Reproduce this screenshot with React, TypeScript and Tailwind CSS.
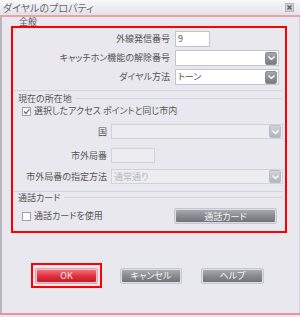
import React from "react";

function DropButton({ disabled = false }: { disabled?: boolean }) {
  return (
    <div
      className={
        "w-[12px] h-[13px] mr-[1px] rounded-[2px] border flex items-center justify-center " +
        (disabled
          ? "border-[#b8bcc6] bg-gradient-to-b from-[#d0d4dc] to-[#b0b5c0]"
          : "border-[#8a8d92] bg-gradient-to-b from-[#a4a7ac] to-[#777a7f]")
      }
    >
      <svg width="7" height="4" viewBox="0 0 7 4">
        <path d="M0.5 0.5 L3.5 3.5 L6.5 0.5" fill="none" stroke="#ffffff" strokeWidth="1.3" />
      </svg>
    </div>
  );
}

function Select({
  width,
  value,
  disabled = false,
}: {
  width: string;
  value?: string;
  disabled?: boolean;
}) {
  return (
    <div
      className={
        width +
        " h-full flex items-center border " +
        (disabled ? "bg-[#ececf1] border-[#d2d2da]" : "bg-white border-[#c4c4cc]")
      }
    >
      <span className={"flex-1 pl-[2px] " + (disabled ? "text-[#b8b8c0]" : "text-[#555]")}>
        {value}
      </span>
      <DropButton disabled={disabled} />
    </div>
  );
}

function CheckBox({ checked }: { checked: boolean }) {
  return (
    <div className="w-[9px] h-[9px] border border-[#a0a0aa] bg-white flex items-center justify-center">
      {checked && (
        <svg width="7" height="7" viewBox="0 0 7 7">
          <path d="M1 3.5 L3 5.5 L6.5 1" fill="none" stroke="#666" strokeWidth="1.2" />
        </svg>
      )}
    </div>
  );
}

function GroupLabel({ text }: { text: string }) {
  return (
    <div className="h-[9px] flex items-center pl-[5px] pr-[2px]">
      <span className="leading-[9px]">{text}</span>
      <div className="flex-1 h-px bg-[#d4d4dc] ml-[4px]" />
    </div>
  );
}

function GrayButton({ label, width }: { label: string; width: string }) {
  return (
    <div className={width + " h-[16px] rounded-[2px] border border-[#c6c8d0] p-px bg-[#dcdde4]"}>
      <div className="w-full h-full rounded-[1px] bg-gradient-to-b from-[#a6a9ae] via-[#888b90] to-[#707378] flex items-center justify-center text-[#f4f4f6] leading-none">
        {label}
      </div>
    </div>
  );
}

export default function App() {
  return (
    <div className="w-[300px] h-[317px] bg-[#e8e8ee] flex flex-col text-[9px] text-[#555] font-['Noto_Sans_CJK_JP','Noto_Sans',sans-serif] [font-feature-settings:'palt']">
      {/* title bar */}
      <div className="h-[15px] flex items-center pl-[3px] pr-[6px] bg-gradient-to-b from-[#f8f8fa] to-[#e2e2e8]">
        <span className="text-[10px] leading-none text-[#6a6a70]">ダイヤルのプロパティ</span>
        <div className="ml-auto w-[9px] h-[9px] bg-[#cfd0d8] border border-[#b4b6c0] flex items-center justify-center">
          <svg width="5" height="5" viewBox="0 0 5 5">
            <path d="M0.5 0.5 L4.5 4.5 M4.5 0.5 L0.5 4.5" stroke="#555" strokeWidth="1.2" />
          </svg>
        </div>
      </div>
      <div className="h-[2px] bg-[#f0a0a8]" />

      {/* body */}
      <div className="h-[296px] border-l-2 border-[#b6b6c0] border-r border-r-[#d4d4dc] flex flex-col">
        <div className="mt-[1px] h-[8px] leading-[8px] ml-[17px]">全般</div>

        <div className="ml-[9px] w-[276px] h-[207px] border-2 border-[#ff0000] flex flex-col">
          <div className="mt-[3px] h-[16px] flex items-center">
            <div className="w-[157px] text-right">外線発信番号</div>
            <div className="ml-[5px] w-[35px] h-full bg-white border border-[#c4c4cc] flex items-center pl-[2px]">
              9
            </div>
          </div>
          <div className="mt-[3px] h-[16px] flex items-center">
            <div className="w-[157px] text-right">キャッチホン機能の解除番号</div>
            <div className="ml-[5px] h-full flex">
              <Select width="w-[104px]" />
            </div>
          </div>
          <div className="mt-[3px] h-[16px] flex items-center">
            <div className="w-[157px] text-right">ダイヤル方法</div>
            <div className="ml-[5px] h-full flex">
              <Select width="w-[104px]" value="トーン" />
            </div>
          </div>

          <div className="mt-[5px] h-px bg-[#d4d4dc] mr-[2px]" />
          <div className="mt-[3px]">
            <GroupLabel text="現在の所在地" />
          </div>
          <div className="mt-[3px] h-[10px] flex items-center pl-[9px]">
            <CheckBox checked />
            <span className="ml-[3px]">選択したアクセス ポイントと同じ市内</span>
          </div>
          <div className="mt-[8px] h-[15px] flex items-center">
            <div className="w-[94px] text-right">国</div>
            <div className="ml-[4px] h-full flex">
              <Select width="w-[172px]" disabled />
            </div>
          </div>
          <div className="mt-[9px] h-[15px] flex items-center">
            <div className="w-[94px] text-right">市外局番</div>
            <div className="ml-[4px] w-[44px] h-full bg-[#ececf1] border border-[#d2d2da]" />
          </div>
          <div className="mt-[6px] h-[15px] flex items-center">
            <div className="w-[94px] text-right">市外局番の指定方法</div>
            <div className="ml-[4px] h-full flex">
              <Select width="w-[172px]" value="通常通り" disabled />
            </div>
          </div>

          <div className="mt-[7px] h-px bg-[#d4d4dc] mr-[2px]" />
          <div className="mt-[1px]">
            <GroupLabel text="通話カード" />
          </div>
          <div className="mt-[6px] h-[16px] flex items-center pl-[9px] pr-[8px]">
            <CheckBox checked={false} />
            <span className="ml-[3px]">通話カードを使用</span>
            <div className="ml-auto">
              <GrayButton label="通話カード" width="w-[103px]" />
            </div>
          </div>
        </div>

        {/* dialog buttons */}
        <div className="mt-[30px] flex items-center ml-[29px]">
          <div className="w-[71px] h-[25px] border-2 border-[#ff0000] flex items-center justify-center">
            <div className="w-[63px] h-[16px] rounded-[2px] border border-[#e8a0a8] p-px bg-[#f2c8cc]">
              <div className="w-full h-full rounded-[1px] bg-gradient-to-b from-[#f26a76] via-[#e0303e] to-[#c41a28] flex items-center justify-center text-[#fbe8ea] leading-none">
                OK
              </div>
            </div>
          </div>
          <div className="ml-[18px]">
            <GrayButton label="キャンセル" width="w-[62px]" />
          </div>
          <div className="ml-[19px]">
            <GrayButton label="ヘルプ" width="w-[63px]" />
          </div>
        </div>
      </div>
      <div className="h-[2px] bg-[#f0909a]" />
    </div>
  );
}
